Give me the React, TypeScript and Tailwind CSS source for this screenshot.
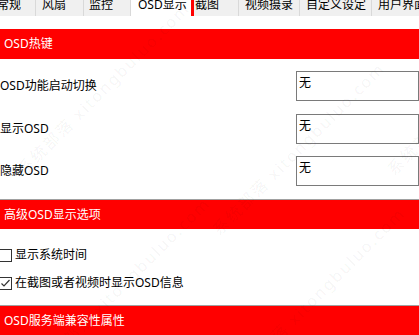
import React from "react";

const tabs: { label: string; w: number; pl: number; active?: boolean }[] = [
  { label: "常规", w: 45, pl: 6 },
  { label: "风扇", w: 48, pl: 6 },
  { label: "监控", w: 47, pl: 5 },
  { label: "OSD显示", w: 60, pl: 7, active: true },
  { label: "截图", w: 48, pl: 4 },
  { label: "视频摄录", w: 61, pl: 6 },
  { label: "自定义设定", w: 72, pl: 6 },
  { label: "用户界面", w: 60, pl: 6 },
];

function Header({ text, line }: { text: string; line?: boolean }) {
  return (
    <div
      className={
        "flex h-[30px] items-center bg-[#ff0000] pl-[4px] text-white " +
        (line ? "border-t border-[#a0a0a0]" : "")
      }
    >
      <span className="leading-[16px]">{text}</span>
    </div>
  );
}

function Row({ label }: { label: string }) {
  return (
    <div className="grid h-[30px] grid-cols-[296px_123px] items-center">
      <span className="leading-[16px]">{label}</span>
      <div className="h-[30px] border border-[#7a7a7a] bg-white pl-[2px] pt-[3px] leading-[16px]">
        无
      </div>
    </div>
  );
}

function Check({ label, checked }: { label: string; checked?: boolean }) {
  return (
    <div className="flex h-[16px] items-center">
      <div className="-ml-[1px] flex h-[13px] w-[13px] items-center justify-center border border-[#333333] bg-white">
        {checked && (
          <svg width="11" height="11" viewBox="0 0 11 11">
            <polyline points="1.5,5.5 4,8 9.5,2" fill="none" stroke="#333" strokeWidth="1.2" />
          </svg>
        )}
      </div>
      <span className="ml-[3px] leading-[16px]">{label}</span>
    </div>
  );
}

const wms = [
  { x: 20, y: 60 },
  { x: 215, y: 120 },
  { x: 40, y: 255 },
  { x: 235, y: 265 },
  { x: 390, y: 60 },
];

export default function App() {
  return (
    <div className="relative h-[335px] w-[419px] overflow-hidden bg-white font-['Noto_Sans','Noto_Sans_CJK_SC',sans-serif] text-[12px] text-black">
      <div className="-ml-[9px] flex h-[16px] overflow-hidden bg-[#f0f0f0]">
        {tabs.map((t) => (
          <div
            key={t.label}
            className={
              "relative h-[16px] shrink-0 whitespace-nowrap leading-[12px] " +
              (t.active ? "bg-white" : "border-r border-[#d9d9d9]")
            }
            style={{ width: t.w, paddingLeft: t.pl }}
          >
            <span className="-mt-[1px] block">{t.label}</span>
            {t.active && (
              <div className="absolute right-[-3px] top-0 h-[16px] w-[3px] bg-[#ff0000]" />
            )}
          </div>
        ))}
      </div>
      <div className="h-[13px]" />
      <Header text="OSD热键" />
      <div className="flex flex-col pb-[13px] pt-[12px]">
        <Row label="OSD功能启动切换" />
        <div className="h-[13px]" />
        <Row label="显示OSD" />
        <div className="h-[12px]" />
        <Row label="隐藏OSD" />
      </div>
      <Header text="高级OSD显示选项" line />
      <div className="flex flex-col pb-[14px] pt-[18px]">
        <Check label="显示系统时间" />
        <div className="h-[12px]" />
        <Check label="在截图或者视频时显示OSD信息" checked />
      </div>
      <Header text="OSD服务端兼容性属性" line />

      {wms.map((w, i) => (
        <div
          key={i}
          aria-hidden="true"
          className="pointer-events-none absolute origin-left -rotate-45 whitespace-nowrap text-[16px] tracking-[2px] text-[#000000]/[0.05]"
          style={{ left: w.x, top: w.y + 100 }}
        >
          系统部落 xitongbuluo.com
        </div>
      ))}
    </div>
  );
}
